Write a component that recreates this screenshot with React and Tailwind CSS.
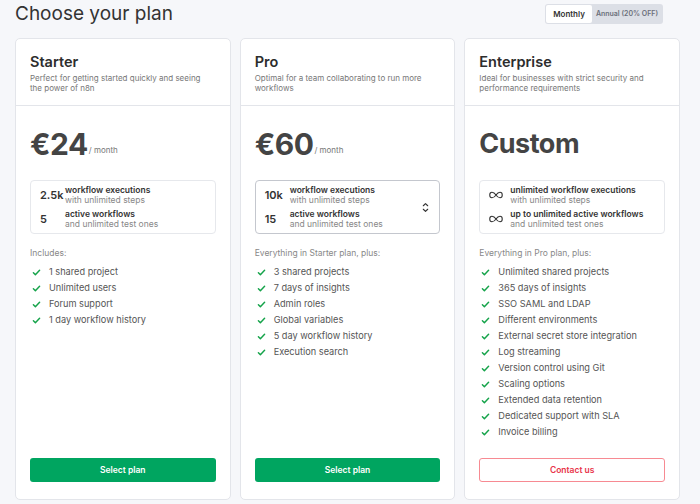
import React from "react";

const Check = () => (
  <svg width="9" height="9" viewBox="0 0 16 16" className="shrink-0">
    <path d="M2.5 8.5 L6 12 L13.5 4" fill="none" stroke="#15a34a" strokeWidth="2.6" strokeLinecap="round" strokeLinejoin="round" />
  </svg>
);

const Infinity = () => (
  <svg width="14" height="8" viewBox="0 0 28 14" className="shrink-0">
    <path d="M14 7 C11 2.5 8 1.5 6 1.5 C3 1.5 1.5 4 1.5 7 C1.5 10 3 12.5 6 12.5 C8 12.5 11 11.5 14 7 C17 2.5 20 1.5 22 1.5 C25 1.5 26.5 4 26.5 7 C26.5 10 25 12.5 22 12.5 C20 12.5 17 11.5 14 7 Z" fill="none" stroke="#333" strokeWidth="2.2" />
  </svg>
);

const Chevrons = () => (
  <svg width="7" height="11" viewBox="0 0 8 12">
    <path d="M1.5 4 L4 1.5 L6.5 4" fill="none" stroke="#333" strokeWidth="1.3" strokeLinecap="round" strokeLinejoin="round" />
    <path d="M1.5 8 L4 10.5 L6.5 8" fill="none" stroke="#333" strokeWidth="1.3" strokeLinecap="round" strokeLinejoin="round" />
  </svg>
);

const plans = [
  {
    name: "Starter",
    desc: ["Perfect for getting started quickly and seeing", "the power of n8n"],
    price: "€24",
    rows: [
      ["2.5k", "workflow executions", "with unlimited steps"],
      ["5", "active workflows", "and unlimited test ones"],
    ],
    select: false,
    includesLabel: "Includes:",
    items: ["1 shared project", "Unlimited users", "Forum support", "1 day workflow history"],
    cta: "Select plan",
  },
  {
    name: "Pro",
    desc: ["Optimal for a team collaborating to run more", "workflows"],
    price: "€60",
    rows: [
      ["10k", "workflow executions", "with unlimited steps"],
      ["15", "active workflows", "and unlimited test ones"],
    ],
    select: true,
    includesLabel: "Everything in Starter plan, plus:",
    items: [
      "3 shared projects",
      "7 days of insights",
      "Admin roles",
      "Global variables",
      "5 day workflow history",
      "Execution search",
    ],
    cta: "Select plan",
  },
  {
    name: "Enterprise",
    desc: ["Ideal for businesses with strict security and", "performance requirements"],
    price: "Custom",
    rows: [
      [null, "unlimited workflow executions", "with unlimited steps"],
      [null, "up to unlimited active workflows", "and unlimited test ones"],
    ],
    select: false,
    includesLabel: "Everything in Pro plan, plus:",
    items: [
      "Unlimited shared projects",
      "365 days of insights",
      "SSO SAML and LDAP",
      "Different environments",
      "External secret store integration",
      "Log streaming",
      "Version control using Git",
      "Scaling options",
      "Extended data retention",
      "Dedicated support with SLA",
      "Invoice billing",
    ],
    cta: "Contact us",
    outline: true,
  },
];

function Card({ p }) {
  const custom = p.price === "Custom";
  return (
    <div className="flex flex-col bg-white border border-[#e3e5ea] rounded-[5px] h-[462px]">
      <div className="px-[14px] pt-[13px] h-[67px] border-b border-[#e3e5ea]">
        <div className="text-[14.5px] font-semibold text-[#2d2d2d] leading-[20px]">{p.name}</div>
        <div className="text-[8px] text-[#777] leading-[10px] mt-[1px]">
          {p.desc[0]}
          <br />
          {p.desc[1]}
        </div>
      </div>
      <div className="flex-1 flex flex-col px-[14px] pb-[17px]">
        <div className="flex items-end mt-[23px] h-[30px]">
          <span className={`font-bold text-[#444] leading-[30px] tracking-[-0.5px] ${custom ? "text-[27px]" : "text-[30px]"}`}>
            {p.price}
          </span>
          {!custom && <span className="text-[8px] text-[#777] ml-[1px] mb-[4px] leading-[10px]">/ month</span>}
        </div>
        <div
          className={`mt-[21px] h-[54px] rounded-[4px] border flex items-center pr-[10px] ${
            p.select ? "border-[#c4c7ce]" : "border-[#e6e8ec]"
          }`}
        >
          <div className="flex-1 flex flex-col gap-[5px] pl-[9px]">
            {p.rows.map((r, i) => (
              <div key={i} className="flex items-center">
                <div className={`${r[0] === null ? "w-[21px] pl-[0px]" : "w-[25px]"} text-[11px] font-semibold text-[#333]`}>
                  {r[0] === null ? <Infinity /> : r[0]}
                </div>
                <div className="flex flex-col">
                  <span className="text-[8.5px] font-semibold text-[#333] leading-[9px]">{r[1]}</span>
                  <span className="text-[8.5px] text-[#888] leading-[10px]">{r[2]}</span>
                </div>
              </div>
            ))}
          </div>
          {p.select && <Chevrons />}
        </div>
        <div className="mt-[14px] text-[8.5px] text-[#888] leading-[11px]">{p.includesLabel}</div>
        <ul className="mt-[5px] flex flex-col">
          {p.items.map((it) => (
            <li key={it} className="flex items-center h-[16px] pl-[2px]">
              <Check />
              <span className="ml-[8px] text-[9.2px] text-[#555]">{it}</span>
            </li>
          ))}
        </ul>
        <div className="flex-1" />
        <button
          className={`h-[24px] w-full rounded-[3px] text-[8.5px] font-semibold ${
            p.outline
              ? "bg-white border border-[#f78a92] text-[#e8334a]"
              : "bg-[#00a560] text-white"
          }`}
        >
          {p.cta}
        </button>
      </div>
    </div>
  );
}

export default function App() {
  return (
    <div className="w-[700px] h-[504px] bg-[#f6f7fa] overflow-hidden" style={{ fontFamily: "Inter, 'Noto Sans', sans-serif" }}>
      <div className="flex items-start justify-between pl-[15px] pr-[37px]">
        <h1 className="text-[19px] font-normal text-[#333] leading-[28px] mt-[0px]">Choose your plan</h1>
        <div className="mt-[4px] flex bg-[#dcdfe6] rounded-[3px] p-[1px] h-[20px]">
          <div className="bg-white rounded-[2px] w-[46px] flex items-center justify-center text-[8px] font-semibold text-[#333]">Monthly</div>
          <div className="w-[70px] flex items-center justify-center text-[7px] font-semibold text-[#6b6f7a]">Annual (20% OFF)</div>
        </div>
      </div>
      <div className="grid grid-cols-3 gap-[9px] w-[665px] ml-[15px] mt-[10px]">
        {plans.map((p) => (
          <Card key={p.name} p={p} />
        ))}
      </div>
    </div>
  );
}
